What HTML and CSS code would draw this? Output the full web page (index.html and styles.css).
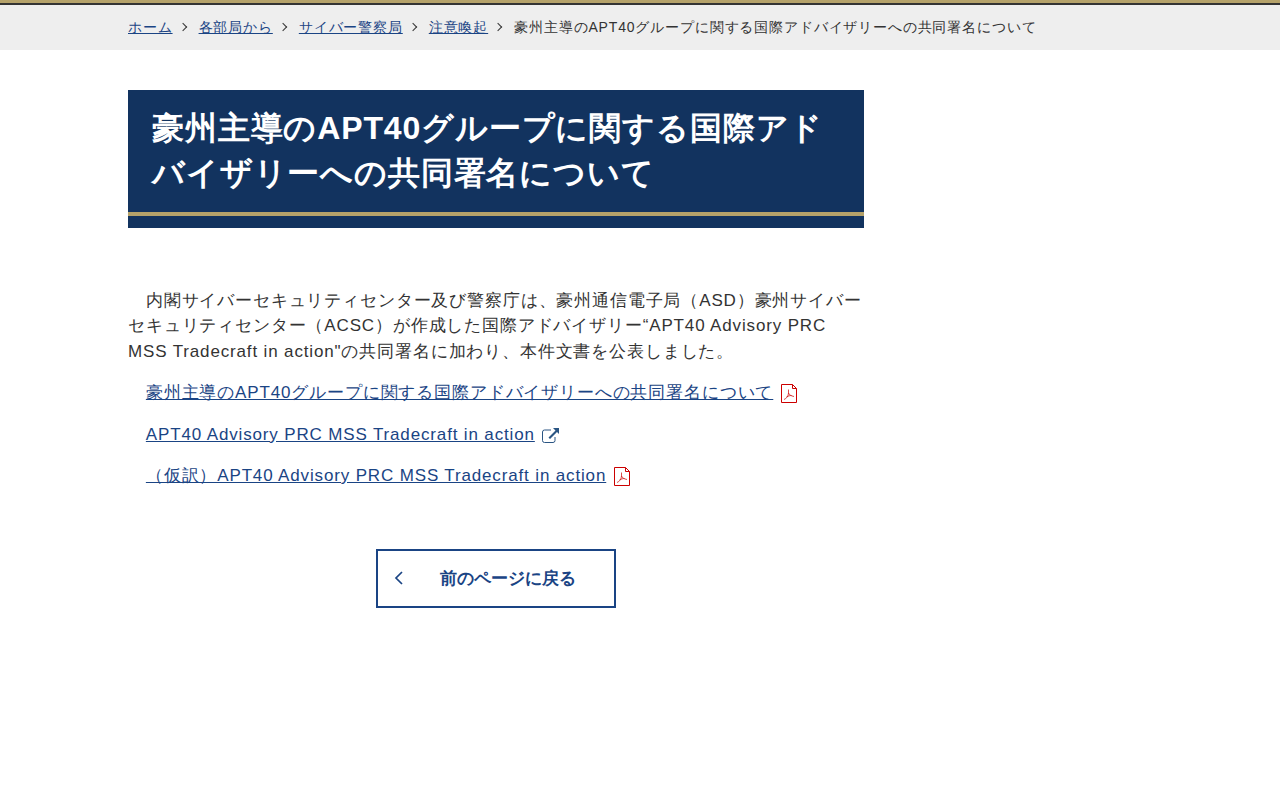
FILE: index.html
```html
<!doctype html>
<html lang="ja">
  <head>
    <meta charset="utf-8">
    <meta name="viewport" content="width=device-width, initial-scale=1">
    <title>豪州主導のAPT40グループに関する国際アドバイザリーへの共同署名について</title>
    <link rel="stylesheet" href="styles.css">
  </head>
<body>
<nav class="breadcrumb" aria-label="パンくずリスト">
  <ol class="breadcrumb_list">
    <li><a href="#">ホーム</a></li>
    <li><a href="#">各部局から</a></li>
    <li><a href="#">サイバー警察局</a></li>
    <li><a href="#">注意喚起</a></li>
    <li>豪州主導のAPT40グループに関する国際アドバイザリーへの共同署名について</li>
  </ol>
</nav>

<div class="contents">
  <main class="contents_main">
    <h1>豪州主導のAPT40グループに関する国際アドバイザリーへの共同署名について</h1>

    <p>　内閣サイバーセキュリティセンター及び警察庁は、豪州通信電子局（ASD）豪州サイバーセキュリティセンター（ACSC）が作成した国際アドバイザリー“APT40 Advisory PRC MSS Tradecraft in action"の共同署名に加わり、本件文書を公表しました。</p>

    <p>　<a href="#">豪州主導のAPT40グループに関する国際アドバイザリーへの共同署名について</a><svg class="icon_pdf" viewBox="0 0 16 19" aria-hidden="true"><path d="M.5.5h11l4 4v14H.5zM11.5.5v4h4"/><path class="mark" d="M7.500 5.500v3.500C7.500 12 5 15 3 15.500M7.500 9C8 10.500 10 12 13 12.500M5.500 13c1.500-1 3.500-1.500 5-1.500"/></svg></p>
    <p>　<a href="#">APT40 Advisory PRC MSS Tradecraft in action</a><svg class="icon_blank" viewBox="0 0 18 15" aria-hidden="true"><path class="line" d="M9 2H2.500a2 2 0 0 0-2 2v8.500a2 2 0 0 0 2 2h8.500a2 2 0 0 0 2-2V9"/><path class="arrow" d="M11 0h6v6l-2-2-7 7-1.500-1.500 7-7z"/></svg></p>
    <p>　<a href="#">（仮訳）APT40 Advisory PRC MSS Tradecraft in action</a><svg class="icon_pdf" viewBox="0 0 16 19" aria-hidden="true"><path d="M.5.5h11l4 4v14H.5zM11.5.5v4h4"/><path class="mark" d="M7.500 5.500v3.500C7.500 12 5 15 3 15.500M7.500 9C8 10.500 10 12 13 12.500M5.500 13c1.500-1 3.500-1.500 5-1.500"/></svg></p>

    <a class="btn_back" href="#"><svg viewBox="0 0 10 14" aria-hidden="true"><path d="M9 1L3 7l6 6"/></svg><span>前のページに戻る</span></a>
  </main>
</div>
</body>
</html>
```

FILE: styles.css
```css
body {
  margin: 0;
  border-top: 3px solid #b5a26a;
  color: #333;
  background-color: #fff;
  font-family: "Liberation Sans", sans-serif;
  font-size: 17px;
  line-height: 1.5;
  letter-spacing: 0.05em;
  text-spacing-trim: space-all;
}

a { color: #1a4484; }

/* breadcrumb */
.breadcrumb {
  padding: 12px 10%;
  border-top: 2px solid #333;
  background-color: #eee;
  font-size: 14px;
}

.breadcrumb_list {
  display: flex;
  flex-wrap: wrap;
  margin: 0;
  padding: 0;
  list-style: none;
}

.breadcrumb_list li + li::before {
  content: "";
  display: inline-block;
  width: 5px;
  height: 5px;
  margin: 0 13px 2px 7px;
  border-top: 1px solid #333;
  border-right: 1px solid #333;
  transform: rotate(45deg);
}

/* contents */
.contents {
  margin: 40px 10%;
}

.contents_main {
  max-width: 736px;
}

h1 {
  margin: 0 0 60px;
  padding: 16px 24px 32px;
  background: linear-gradient(#b5a26a, #b5a26a) 0 calc(100% - 12px) / 100% 4px no-repeat #12335f;
  color: #fff;
  font-size: 32px;
  line-height: 1.4;
}

p {
  margin: 0 0 16px;
}

svg {
  fill: none;
}

.icon_pdf {
  width: 16px;
  height: 19px;
  margin-left: 8px;
  vertical-align: -5px;
  stroke: #c00;
}

.icon_pdf .mark { stroke-width: 0.7; }

.icon_blank {
  width: 18px;
  height: 15px;
  margin-left: 7px;
  vertical-align: -3px;
}

.icon_blank .line { stroke: #2a5583; }
.icon_blank .arrow { fill: #2a5583; }

.btn_back {
  display: flex;
  align-items: center;
  box-sizing: border-box;
  width: 240px;
  margin: 60px auto 0;
  padding: 15px;
  border: 2px solid #1a4484;
  font-weight: bold;
  letter-spacing: 0;
  text-decoration: none;
}

.btn_back svg {
  width: 10px;
  height: 14px;
  stroke: #1a4484;
  stroke-width: 1.7;
}

.btn_back span {
  flex: 1;
  padding-left: 14px;
  text-align: center;
}
```
